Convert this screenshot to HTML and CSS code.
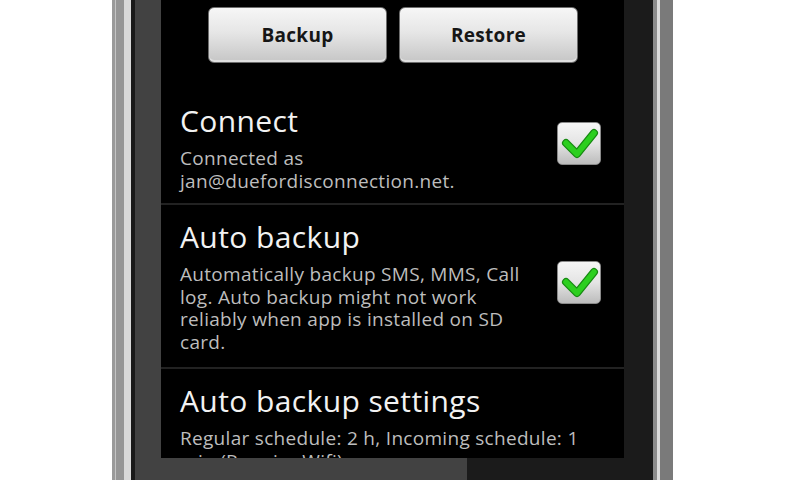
FILE: index.html
```html
<!DOCTYPE html>
<html lang="en">
<head>
<meta charset="utf-8">
<title>Backup settings</title>
<link rel="stylesheet" href="styles.css">
</head>
<body>
<div class="device">
  <div class="rim">
    <div class="bezel">
      <main class="screen">
        <div class="actions">
          <button class="btn">Backup</button>
          <button class="btn">Restore</button>
        </div>
        <ul class="prefs">
          <li class="pref pref-first">
            <div class="pref-text">
              <div class="pref-title">Connect</div>
              <div class="pref-summary">Connected as jan@duefordisconnection.net.</div>
            </div>
            <span class="check" aria-label="checked">
              <svg viewBox="0 0 44 43" width="44" height="43"><path d="M9 21 L20 32 L37 11" fill="none" stroke="#178a12" stroke-width="8" stroke-linecap="round" stroke-linejoin="round"/><path d="M9 21 L20 32 L37 11" fill="none" stroke="#2ccf1f" stroke-width="5.5" stroke-linecap="round" stroke-linejoin="round"/></svg>
            </span>
          </li>
          <li class="pref">
            <div class="pref-text">
              <div class="pref-title">Auto backup</div>
              <div class="pref-summary">Automatically backup SMS, MMS, Call log. Auto backup might not work reliably when app is installed on SD card.</div>
            </div>
            <span class="check" aria-label="checked">
              <svg viewBox="0 0 44 43" width="44" height="43"><path d="M9 21 L20 32 L37 11" fill="none" stroke="#178a12" stroke-width="8" stroke-linecap="round" stroke-linejoin="round"/><path d="M9 21 L20 32 L37 11" fill="none" stroke="#2ccf1f" stroke-width="5.5" stroke-linecap="round" stroke-linejoin="round"/></svg>
            </span>
          </li>
          <li class="pref">
            <div class="pref-text pref-text-wide">
              <div class="pref-title">Auto backup settings</div>
              <div class="pref-summary">Regular schedule: 2 h, Incoming schedule: 1 min (Require Wifi)</div>
            </div>
          </li>
        </ul>
      </main>
    </div>
  </div>
</div>
</body>
</html>
```
FILE: styles.css
```css
html, body {
  margin: 0;
  padding: 0;
  background: #ffffff;
  height: 480px;
  overflow: hidden;
}

.device {
  margin-left: 112px;
  width: 561px;
  height: 480px;
  box-sizing: border-box;
  background: linear-gradient(to right, #9a9a9a 0 3px, #c4c4c4 3px 4px, #959595 4px 12px, #7a7a7a 12px);
  padding: 0 13px 0 12px;
  display: flex;
}

.rim {
  flex: 1;
  display: flex;
  border-left: 7px solid #d8d8d8;
  border-right: 3px solid #dcdcdc;
}

.bezel {
  flex: 1;
  display: flex;
  border-left: 4px solid #1a1a1a;
  border-right: 4px solid #8c8c8c;
  background: linear-gradient(to right, #424242 0 332px, #1b1b1b 332px);
}

.screen {
  margin-left: 26px;
  width: 463px;
  height: 458px;
  background: #000;
  overflow: hidden;
  font-family: "Open Sans", "Noto Sans", "DejaVu Sans", sans-serif;
}

.actions {
  display: flex;
  gap: 12px;
  padding: 7px 46px 0 47px;
}

.btn {
  flex: 1;
  height: 56px;
  border: 1px solid #6d6d6d;
  border-radius: 6px;
  background: linear-gradient(to bottom, #f6f6f6 0%, #e6e6e6 45%, #c6c6c6 100%);
  box-shadow: inset 0 -2px 0 #e0e0e0;
  font-family: "Open Sans", "DejaVu Sans", sans-serif;
  font-weight: 700;
  font-size: 19px;
  letter-spacing: 0.3px;
  color: #161616;
  padding: 0;
}

.prefs {
  list-style: none;
  margin: 26px 0 0 0;
  padding: 0;
}

.pref {
  display: flex;
  align-items: center;
  gap: 17px;
  padding: 14px 23px 14px 19px;
  border-top: 2px solid #222;
}

.pref-first {
  border-top: none;
  padding-bottom: 11px;
}

.pref-text {
  width: 360px;
}

.pref-text-wide {
  width: 421px;
}

.pref-title {
  font-size: 30px;
  line-height: 36px;
  letter-spacing: 0.4px;
  color: #f2f2f2;
}

.pref-summary {
  margin-top: 8px;
  font-size: 19px;
  line-height: 22.5px;
  letter-spacing: 0.3px;
  color: #bdbdbd;
}

.check {
  width: 44px;
  height: 43px;
  flex: none;
  margin-bottom: 8px;
  box-sizing: border-box;
  border: 1px solid #8a8a8a;
  border-radius: 5px;
  background: linear-gradient(to bottom, #f6f6f6 0%, #e4e4e4 50%, #bcbcbc 100%);
  display: flex;
}

.check svg {
  display: block;
  margin: -1px;
}
```
